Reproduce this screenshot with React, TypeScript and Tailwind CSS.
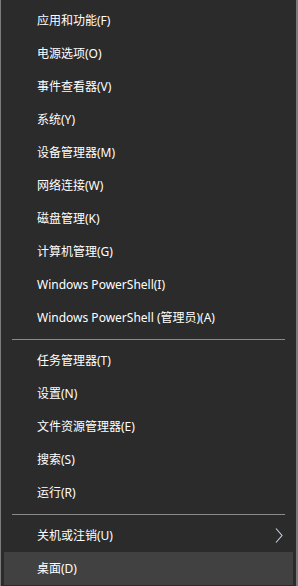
const groups: { label: string; sub?: boolean; active?: boolean }[][] = [
  [
    { label: "应用和功能(F)" },
    { label: "电源选项(O)" },
    { label: "事件查看器(V)" },
    { label: "系统(Y)" },
    { label: "设备管理器(M)" },
    { label: "网络连接(W)" },
    { label: "磁盘管理(K)" },
    { label: "计算机管理(G)" },
    { label: "Windows PowerShell(I)" },
    { label: "Windows PowerShell (管理员)(A)" },
  ],
  [
    { label: "任务管理器(T)" },
    { label: "设置(N)" },
    { label: "文件资源管理器(E)" },
    { label: "搜索(S)" },
    { label: "运行(R)" },
  ],
  [
    { label: "关机或注销(U)", sub: true },
    { label: "桌面(D)", active: true },
  ],
];

export default function App() {
  return (
    <div
      className="h-[586px] w-[298px] overflow-hidden border-l border-r-2 border-[#7b7b7b] bg-[#2b2b2b] pt-1 text-[12px] text-white"
      style={{ fontFamily: '"Segoe UI", "Noto Sans", "Noto Sans CJK SC", sans-serif' }}
    >
      {groups.map((g, gi) => (
        <div key={gi}>
          {gi > 0 && (
            <div className="flex h-[10px] items-center px-[11px]">
              <div className="h-px w-full bg-[#8a8a8a]" />
            </div>
          )}
          {g.map((it) => (
            <div
              key={it.label}
              className={`mx-[3px] flex h-[33px] items-center justify-between pl-[33px] pr-[10px] ${it.active ? "bg-[#414141]" : ""}`}
            >
              <span>{it.label}</span>
              {it.sub && (
                <svg width="8" height="15" viewBox="0 0 8 15" className="text-[#c8d4e0]">
                  <path d="M1 0.5 L7 7.5 L1 14.5" fill="none" stroke="currentColor" strokeWidth="1.1" />
                </svg>
              )}
            </div>
          ))}
        </div>
      ))}
    </div>
  );
}
